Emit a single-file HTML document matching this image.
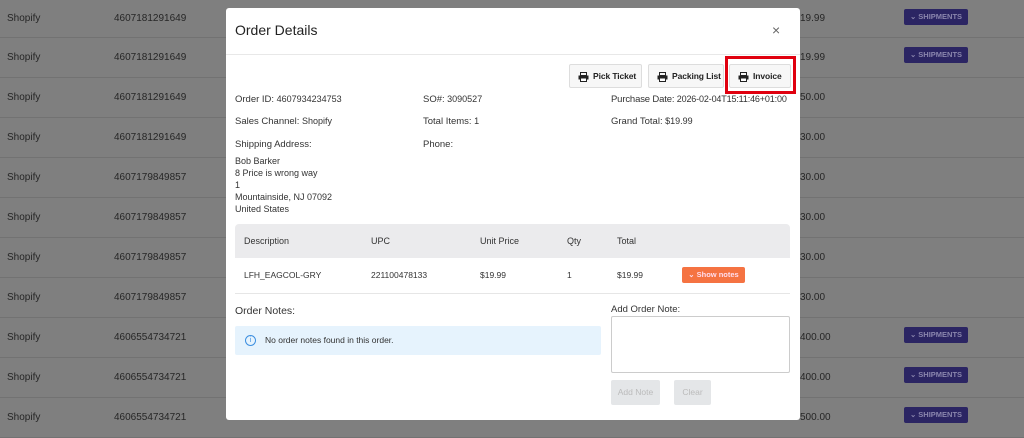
<!DOCTYPE html>
<html><head><style>
*{box-sizing:border-box;margin:0;padding:0}
body{width:1024px;height:428px;overflow:hidden;background:#7f7f7f;font-family:"Liberation Sans",sans-serif;position:relative;color:#222}
.row{position:absolute;left:0;width:1024px;height:40px;border-bottom:1px solid #727272;font-size:10px;color:#262626}
.row span{position:absolute;top:14px}
.ship{position:absolute;left:904px;top:9px;width:64px;height:16px;background:#2b2563;border-radius:2px;color:#8a86ad;font-size:7.5px;font-weight:bold;line-height:16px;text-align:center;white-space:nowrap}
.modal{position:absolute;left:226px;top:8px;width:574px;height:412px;background:#fff;border-radius:3px}
.a{position:absolute;font-size:9px;color:#333;white-space:nowrap}
.l{font-size:9.5px;color:#333}
.btn{position:absolute;top:56px;height:24px;border:1px solid #ddd;background:#f7f7f7;border-radius:2px;font-size:8.5px;font-weight:bold;line-height:22px;padding-left:23px;color:#222;white-space:nowrap;letter-spacing:-0.1px}
.btn svg{position:absolute;left:8px;top:7px}
</style></head><body>
<div class="row" style="top:-2px"><span style="left:7px;top:15px">Shopify</span><span style="left:114px;top:15px">4607181291649</span><span style="left:800px;top:15px">19.99</span><div class="ship" style="top:11px">⌄ SHIPMENTS</div></div>
<div class="row" style="top:38px"><span style="left:7px">Shopify</span><span style="left:114px">4607181291649</span><span style="left:800px">19.99</span><div class="ship">⌄ SHIPMENTS</div></div>
<div class="row" style="top:78px"><span style="left:7px">Shopify</span><span style="left:114px">4607181291649</span><span style="left:800px">50.00</span></div>
<div class="row" style="top:118px"><span style="left:7px">Shopify</span><span style="left:114px">4607181291649</span><span style="left:800px">30.00</span></div>
<div class="row" style="top:158px"><span style="left:7px">Shopify</span><span style="left:114px">4607179849857</span><span style="left:800px">30.00</span></div>
<div class="row" style="top:198px"><span style="left:7px">Shopify</span><span style="left:114px">4607179849857</span><span style="left:800px">30.00</span></div>
<div class="row" style="top:238px"><span style="left:7px">Shopify</span><span style="left:114px">4607179849857</span><span style="left:800px">30.00</span></div>
<div class="row" style="top:278px"><span style="left:7px">Shopify</span><span style="left:114px">4607179849857</span><span style="left:800px">30.00</span></div>
<div class="row" style="top:318px"><span style="left:7px">Shopify</span><span style="left:114px">4606554734721</span><span style="left:800px">400.00</span><div class="ship">⌄ SHIPMENTS</div></div>
<div class="row" style="top:358px"><span style="left:7px">Shopify</span><span style="left:114px">4606554734721</span><span style="left:800px">400.00</span><div class="ship">⌄ SHIPMENTS</div></div>
<div class="row" style="top:398px"><span style="left:7px">Shopify</span><span style="left:114px">4606554734721</span><span style="left:800px">500.00</span><div class="ship">⌄ SHIPMENTS</div></div>

<div class="modal">
<div style="position:absolute;left:9px;top:14px;font-size:14px;color:#222">Order Details</div>
<div style="position:absolute;left:546px;top:14px;font-size:14px;color:#666">×</div>
<div style="position:absolute;left:0;top:46px;width:574px;border-top:1px solid #e8e8e8"></div>
<div class="btn" style="left:343px;width:73px"><svg width="11" height="10" viewBox="0 0 11 10"><rect x="2.5" y="0.5" width="6" height="3" fill="none" stroke="#222"/><rect x="0.5" y="3.5" width="10" height="4" fill="#222"/><rect x="2.5" y="6" width="6" height="3.5" fill="#fff" stroke="#222"/></svg>Pick Ticket</div>
<div class="btn" style="left:422px;width:76px"><svg width="11" height="10" viewBox="0 0 11 10"><rect x="2.5" y="0.5" width="6" height="3" fill="none" stroke="#222"/><rect x="0.5" y="3.5" width="10" height="4" fill="#222"/><rect x="2.5" y="6" width="6" height="3.5" fill="#fff" stroke="#222"/></svg>Packing List</div>
<div class="btn" style="left:503px;width:62px"><svg width="11" height="10" viewBox="0 0 11 10"><rect x="2.5" y="0.5" width="6" height="3" fill="none" stroke="#222"/><rect x="0.5" y="3.5" width="10" height="4" fill="#222"/><rect x="2.5" y="6" width="6" height="3.5" fill="#fff" stroke="#222"/></svg>Invoice</div>
<div style="position:absolute;left:499px;top:48px;width:71px;height:38px;border:3px solid #e0000f"></div>

<div class="a" style="left:9px;top:86px"><span class="l">Order ID:</span> 4607934234753</div>
<div class="a" style="left:197px;top:86px"><span class="l">SO#:</span> 3090527</div>
<div class="a" style="left:385px;top:86px;letter-spacing:-0.15px"><span class="l">Purchase Date:</span> 2026-02-04T15:11:46+01:00</div>
<div class="a" style="left:9px;top:108px"><span class="l">Sales Channel:</span> Shopify</div>
<div class="a" style="left:197px;top:108px"><span class="l">Total Items:</span> 1</div>
<div class="a" style="left:385px;top:108px"><span class="l">Grand Total:</span> $19.99</div>
<div class="a l" style="left:9px;top:131px">Shipping Address:</div>
<div class="a l" style="left:197px;top:131px">Phone:</div>
<div class="a" style="left:9px;top:147px;line-height:12px">Bob Barker<br>8 Price is wrong way<br>1<br>Mountainside, NJ 07092<br>United States</div>

<div style="position:absolute;left:9px;top:216px;width:555px;height:34px;background:#ebebed;border-radius:4px 4px 0 0"></div>
<div class="a" style="left:18px;top:228px">Description</div>
<div class="a" style="left:145px;top:228px">UPC</div>
<div class="a" style="left:254px;top:228px">Unit Price</div>
<div class="a" style="left:341px;top:228px">Qty</div>
<div class="a" style="left:391px;top:228px">Total</div>
<div class="a" style="left:18px;top:262px;font-size:8.5px">LFH_EAGCOL-GRY</div>
<div class="a" style="left:145px;top:262px;font-size:8.5px">221100478133</div>
<div class="a" style="left:254px;top:262px;font-size:8.5px">$19.99</div>
<div class="a" style="left:341px;top:262px;font-size:8.5px">1</div>
<div class="a" style="left:391px;top:262px;font-size:8.5px">$19.99</div>
<div style="position:absolute;left:456px;top:259px;width:63px;height:16px;background:#f57342;border-radius:2px;color:#fde;font-size:7.5px;font-weight:bold;line-height:16px;text-align:center;white-space:nowrap">⌄ Show notes</div>
<div style="position:absolute;left:9px;top:285px;width:555px;border-top:1px solid #e6e6e6"></div>

<div class="a" style="left:9px;top:297px;font-size:10.5px">Order Notes:</div>
<div style="position:absolute;left:9px;top:318px;width:366px;height:29px;background:#e6f3fd;border-radius:2px"></div>
<div style="position:absolute;left:19px;top:327px;width:11px;height:11px;border:1px solid #3d8fe0;border-radius:50%;font-size:7px;color:#3d8fe0;text-align:center;line-height:9px">i</div>
<div class="a" style="left:39px;top:327px;font-size:8.5px">No order notes found in this order.</div>
<div class="a" style="left:385px;top:296px;font-size:9.5px">Add Order Note:</div>
<div style="position:absolute;left:385px;top:308px;width:179px;height:57px;border:1px solid #ccc;border-radius:2px"></div>
<div style="position:absolute;left:385px;top:372px;width:49px;height:25px;background:#e4e6e8;border-radius:2px;color:#bbb;font-size:8.5px;text-align:center;line-height:25px">Add Note</div>
<div style="position:absolute;left:448px;top:372px;width:37px;height:25px;background:#e4e6e8;border-radius:2px;color:#bbb;font-size:8.5px;text-align:center;line-height:25px">Clear</div>
</div>
</body></html>
